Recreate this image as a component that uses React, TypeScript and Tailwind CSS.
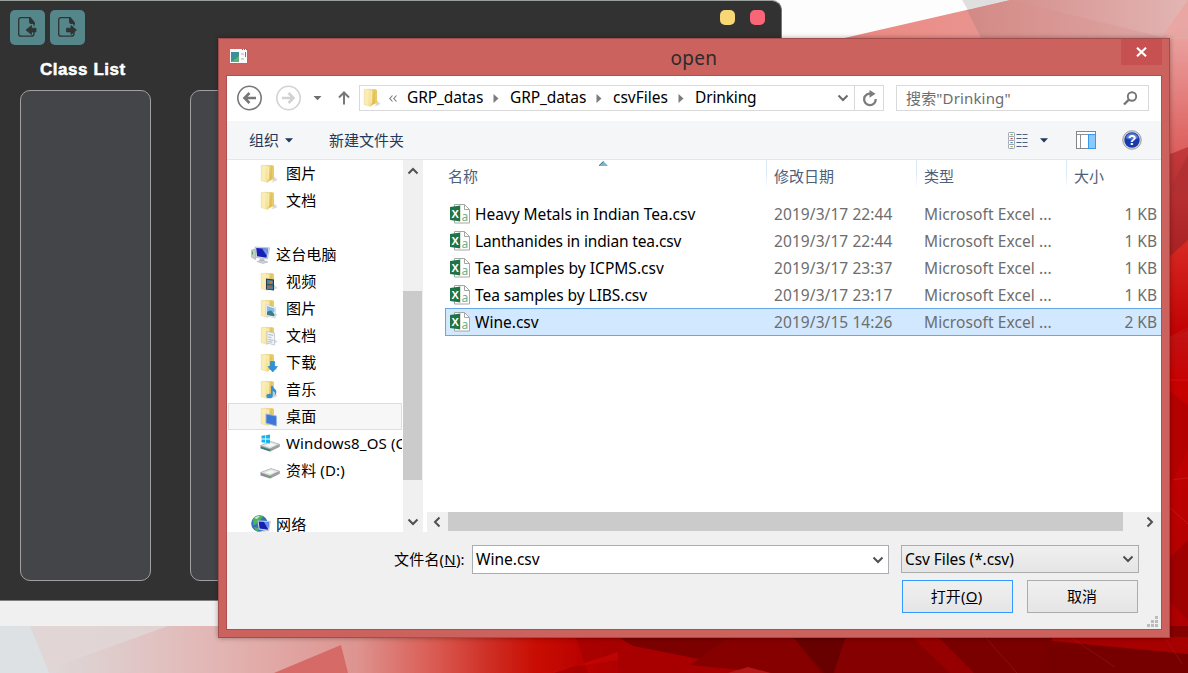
import React from "react";

const Wallpaper = () => (
  <svg className="absolute inset-0" width="1188" height="673" viewBox="0 0 1188 673">
    <defs>
      <linearGradient id="bottom" x1="0" x2="1188" y1="0" y2="0" gradientUnits="userSpaceOnUse">
        <stop offset="0" stopColor="#dde0e2" />
        <stop offset="0.08" stopColor="#dfcfcf" />
        <stop offset="0.19" stopColor="#e2b3b1" />
        <stop offset="0.3" stopColor="#de9490" />
        <stop offset="0.37" stopColor="#d9574e" />
        <stop offset="0.41" stopColor="#cf3026" />
        <stop offset="0.45" stopColor="#c90d03" />
        <stop offset="0.49" stopColor="#b90200" />
        <stop offset="0.55" stopColor="#a60000" />
        <stop offset="1" stopColor="#860000" />
      </linearGradient>
      <linearGradient id="right" x1="0" x2="0" y1="0" y2="1">
        <stop offset="0" stopColor="#eba5a3" />
        <stop offset="0.19" stopColor="#dc5e5c" />
        <stop offset="0.24" stopColor="#cc4a48" />
        <stop offset="0.4" stopColor="#bb2224" />
        <stop offset="0.55" stopColor="#c80000" />
        <stop offset="1" stopColor="#a90000" />
      </linearGradient>
      <linearGradient id="pink" x1="0" x2="1" y1="0" y2="0">
        <stop offset="0" stopColor="#ec8781" />
        <stop offset="1" stopColor="#e5a7a3" />
      </linearGradient>
      <linearGradient id="dusk" x1="0" x2="1" y1="0" y2="0">
        <stop offset="0" stopColor="#d38985" />
        <stop offset="1" stopColor="#e2b5b3" />
      </linearGradient>
      <linearGradient id="darkRed" x1="0" x2="0" y1="0" y2="1">
        <stop offset="0" stopColor="#c23a3c" />
        <stop offset="1" stopColor="#a92022" />
      </linearGradient>
      <linearGradient id="bright" x1="0" x2="0" y1="0" y2="1">
        <stop offset="0" stopColor="#d82a24" />
        <stop offset="1" stopColor="#bf0000" />
      </linearGradient>
    </defs>
    <rect width="1188" height="45" fill="#fdfdfd" />
    <rect x="1160" y="30" width="28" height="643" fill="url(#right)" />
    <polygon points="840,39 1010,0 1188,0 1188,39" fill="url(#pink)" />
    <polygon points="962,0 1010,0 968,10" fill="#e0dfdf" />
    <polygon points="967,10 1010,0 1188,0 1168,40 982,40" fill="url(#dusk)" />
    <polygon points="985,7 1010,0 1170,39 1008,39" fill="#d68f8b" opacity="0.3" />
    <polygon points="1188,0 1188,27 1160,40" fill="#eaa6a3" />
    <polygon points="1168,155 1188,147 1188,245 1168,258" fill="url(#darkRed)" />
    <polygon points="1168,193 1188,155 1188,193" fill="#b33032" />
    <polygon points="1168,258 1188,240 1188,330 1168,338" fill="url(#bright)" />
    <path d="M1168 338L1188 328M1168 380h20M1168 480l20-2M1168 506l20 18" stroke="#d0292a" strokeWidth="1" opacity="0.5" />
    <polygon points="1168,390 1188,405 1188,450 1168,490" fill="#b50000" />
    <polygon points="1168,560 1188,540 1188,620 1168,600" fill="#9f0000" />
    <rect y="626" width="1188" height="47" fill="url(#bottom)" />
    <polygon points="0,626 30,626 49,673 0,673" fill="#dde1e4" />
    <polygon points="30,626 168,626 49,669" fill="#e1d5d5" opacity="0.9" />
    <polygon points="274,673 341,645 348,673" fill="#d66a66" />
    <polygon points="576,637 640,637 618,652 554,673 588,673" fill="#a40000" opacity="0.7" />
    <polygon points="535,673 554,673 618,652 618,660" fill="#d00a06" opacity="0.4" />
    <polygon points="618,652 640,645 771,673 618,673" fill="#a80000" />
    <polygon points="618,637 800,637 835,673 771,673 633,646" fill="#7d0000" />
    <polygon points="690,665 730,637 793,637 820,673 771,673" fill="#860000" />
    <polygon points="793,637 846,637 834,673 824,673" fill="#680000" />
    <polygon points="846,637 912,637 970,673 834,673" fill="#850000" />
    <polygon points="912,637 938,637 974,673 950,673" fill="#970000" />
    <polygon points="938,637 1060,637 1040,673 974,673" fill="#7a0000" />
    <polygon points="1052,637 1188,637 1188,668 1052,641" fill="#a60000" />
    <polygon points="1052,641 1188,654 1188,673 1038,673" fill="#760000" />
    <polygon points="728,673 748,667 771,673" fill="#b51616" />
    <path d="M985 637l32 36M1070 637l45 30M1165 637l17 27" stroke="#a51c1c" opacity="0.45" fill="none" />
  </svg>
);

const ToolIcon = ({ out }: { out?: boolean }) => (
  <svg width="35" height="35" viewBox="0 0 35 35" fill="none">
    <path d="M24 22v1.500q0 2.700-2.500 2.700h-10.500q-2.300 0-2.300-2.300V10q0-2.300 2.300-2.300h9l4 5v3" stroke="#2f3434" strokeWidth="1.300" />
    <path d="M19 7.500h1.700l4.100 5v1.500h-3.800q-2 0-2-2z" fill="#2f3434" />
    <path
      d={out ? "M16.500 18.200h4.500v-2.700l5.500 4.500-5.500 4.500v-2.600h-4.500z" : "M26 18.200h-4.500v-2.700l-5.500 4.500 5.500 4.500v-2.600h4.500z"}
      fill="#2f3434"
      stroke="#2f3434"
      strokeWidth="0.800"
    />
  </svg>
);

type Badge = "none" | "video" | "picture" | "doc" | "down" | "music" | "desktop";

const Folder = ({ badge = "none" }: { badge?: Badge }) => (
  <svg width="18" height="20" viewBox="0 0 18 20" className="shrink-0">
    <defs>
      <linearGradient id="fold" x1="0" x2="1" y1="0" y2="0.3">
        <stop offset="0" stopColor="#fbf0b4" />
        <stop offset="0.55" stopColor="#f3de90" />
        <stop offset="1" stopColor="#dfb94c" />
      </linearGradient>
    </defs>
    <path d="M12 18.500l5.500-2.500-3.500-3.500z" fill="#c9c9c9" opacity="0.7" />
    <path d="M5 1.200h7.800l1.200 1v12.800l-7 3z" fill="#e8ca66" />
    <path d="M1.200 1.500l5.800-.3v17l-5.800-1.600z" fill="#f9edb4" stroke="#e6d28c" strokeWidth="0.500" />
    <path d="M5 4l3.200-2.500h3.300v13.500l-4 3.700-2.500-.9z" fill="url(#fold)" />
    <path d="M8.200 3v12" stroke="#fff8cf" strokeWidth="0.800" />
    {badge === "video" && (
      <g>
        <path d="M6 6.500l8 1v11l-8-1z" fill="#2d3a45" />
        <path d="M7 7.800l6 .6v4.200l-6-.4zM7 13l6 .5v4l-6-.6z" fill="#3e86a8" />
        <circle cx="10.800" cy="10.300" r="1.500" fill="#d4742e" />
        <circle cx="9.500" cy="15.200" r="1.400" fill="#b8622c" />
      </g>
    )}
    {badge === "picture" && (
      <g>
        <path d="M6 5.500l9.500 3v10.500l-9.500-2z" fill="#f4f8fb" stroke="#b9c3cc" strokeWidth="0.500" />
        <path d="M7 7l7.500 2.400v4l-7.500-1z" fill="#7dbbe8" />
        <path d="M7 12.400l4-1 3.500 3.600v2.500l-7.500-1.600z" fill="#3d7c8a" />
      </g>
    )}
    {badge === "doc" && (
      <g>
        <path d="M7 5.500l7.500 1.500v12l-7.500-2z" fill="#f3f5f8" stroke="#aab3bd" strokeWidth="0.600" />
        <path d="M8.300 8.500l5 .8M8.300 11l3 .5M8.300 13.500l5 .9M8.300 15.500l4 .8" stroke="#8fa4bd" strokeWidth="0.800" />
      </g>
    )}
    {badge === "down" && <path d="M10.500 8.500h4.200v5h2.800l-4.800 5.500-4.800-5.500h2.600z" fill="#2b93dc" stroke="#1b78bd" strokeWidth="0.500" />}
    {badge === "music" && (
      <g fill="#3590cf">
        <ellipse cx="9.500" cy="16" rx="3.200" ry="2.300" />
        <path d="M11 6h1.800c.3 2.500 4 3 3.500 6.500-.1 1.700-1 2.500-1.600 3 .8-2.800-.4-3.900-2-4.500v5.200h-1.700z" />
      </g>
    )}
    {badge === "desktop" && <path d="M6 7l10.500 2v10l-10.500-2.800z" fill="#3c78d8" stroke="#9cb5dd" strokeWidth="0.900" />}
  </svg>
);

const Computer = () => (
  <svg width="20" height="18" viewBox="0 0 20 18" className="shrink-0">
    <path d="M.5 4l4-1v10.500l-4-2.200z" fill="#c6cbd0" stroke="#979da3" strokeWidth="0.500" />
    <path d="M1.500 5.500v3" stroke="#52a850" />
    <path d="M4 1l14.500.8-2 11.200-11.500-1.600z" fill="#dfe3ea" stroke="#a3aab5" strokeWidth="0.600" />
    <path d="M5.200 2.100l11.900.7-1.600 8.900-9.400-1.400z" fill="#1620b4" />
    <path d="M11 2.400l6.100.4-1.300 7z" fill="#6d94ee" />
    <path d="M9 12.500l4 .6 1 2.700-6-.8z" fill="#bcc1c7" />
    <path d="M6 15.500l6-1 5 1.500-5 1.500z" fill="#d0d3d7" stroke="#a0a4a9" strokeWidth="0.500" />
  </svg>
);

const Drive = ({ os }: { os?: boolean }) => (
  <svg width="20" height="20" viewBox="0 0 20 20" className="shrink-0">
    <path d="M.5 11.500l10.500-4 8.500 2.700v2.500l-9.500 4.800-9.500-3z" fill="#8c9094" />
    <path d="M.5 11.500l10.500-4 8.500 2.700-9.500 4.500z" fill="#e1e3e4" stroke="#a5a8ab" strokeWidth="0.500" />
    <path d="M5 11.600l6-2.300 4.500 1.400-5.500 2.400z" fill="#f8f8f8" />
    <path d="M10 14.700l9.500-4.500v2.500l-9.500 4.800z" fill="#9da1a4" />
    <circle cx="10.500" cy="15.800" r="0.900" fill="#55b855" />
    {os && <path d="M1.500 1.800l3.500-.5v3.300h-3.500zM5.700 1.200l4.300-.6v4h-4.300zM1.500 5.400h3.500v3.300l-3.500-.5zM5.700 5.400h4.300v4l-4.300-.6z" fill="#13b4ea" />}
    {os && <path d="M.8 12.800l9.200 3v1.400l-9.200-3z" fill="#2c7c86" />}
  </svg>
);

const Network = () => (
  <svg width="20" height="19" viewBox="0 0 20 19" className="shrink-0">
    <circle cx="8.500" cy="8.500" r="8.300" fill="#2f72b8" />
    <path d="M2 4q5-5 10-2.500l-2 3-3.500 1-1 3.500-3 1.500zM3 12l4 1v4q-3-1.500-4-5z" fill="#4cb45a" />
    <path d="M3 3q3-2.500 6-2l-3 3z" fill="#c8eec8" />
    <path d="M6.500 5.500l12.800.8-1.500 9.700-10.200-1.500z" fill="#d9dee6" stroke="#9ca5b1" strokeWidth="0.500" />
    <path d="M7.700 6.600l10.400.7-1.200 7.500-8.400-1.300z" fill="#1420b0" />
    <path d="M13 7l5.100.3-1.200 6.700z" fill="#6c93ea" />
    <path d="M8 17.500l5-1.500 5 1.500-4 1.500z" fill="#ccd0d4" />
  </svg>
);

const ExcelFile = () => (
  <svg width="20" height="21" viewBox="0 0 20 21" className="relative -top-px shrink-0">
    <path d="M4.500 1.500h10l5 5v13.500h-15z" fill="#fff" stroke="#a6a6a6" />
    <path d="M14.500 1.500v5h5" fill="none" stroke="#a6a6a6" />
    <path d="M0 4l10.500-1.500v16l-10.500-1.500z" fill="#1f7346" />
    <path d="M10.500 3v16" stroke="#fff" strokeWidth="0.600" />
    <text x="1.400" y="14.700" fontSize="11" fontWeight="700" fill="#fff" className="font-['Liberation_Sans',sans-serif]">X</text>
    <text x="11.600" y="17.800" fontSize="12" fill="#6bb08a" className="font-['Noto_Sans',sans-serif]">a</text>
  </svg>
);

const Chevron = ({ dir, color = "#505050" }: { dir: "up" | "down" | "left" | "right"; color?: string }) => {
  const d = {
    up: "M1.500 8.500L6 4l4.500 4.500",
    down: "M1.500 3.500L6 8l4.500-4.500",
    left: "M8.500 1.500L4 6l4.500 4.500",
    right: "M3.500 1.500L8 6l-4.500 4.500",
  }[dir];
  return (
    <svg width="12" height="12" viewBox="0 0 12 12" className="shrink-0">
      <path d={d} fill="none" stroke={color} strokeWidth="2" />
    </svg>
  );
};

const Caret = () => (
  <svg width="8" height="5" viewBox="0 0 8 5">
    <path d="M0 .3h8L4 4.600z" fill="#1e395b" />
  </svg>
);

const Crumb = ({ text, className }: { text: string; className: string }) => (
  <>
    <span className={"whitespace-nowrap " + className}>{text}</span>
    <svg width="6" height="9" viewBox="0 0 6 9" className="ml-[10px] mr-[11px] shrink-0">
      <path d="M.5 0L5.500 4.500.5 9z" fill="#7c7c7c" />
    </svg>
  </>
);

const tree: { label: string; icon: React.ReactNode; root?: boolean; selected?: boolean }[] = [
  { label: "图片", icon: <Folder /> },
  { label: "文档", icon: <Folder /> },
  { label: "", icon: null },
  { label: "这台电脑", icon: <Computer />, root: true },
  { label: "视频", icon: <Folder badge="video" /> },
  { label: "图片", icon: <Folder badge="picture" /> },
  { label: "文档", icon: <Folder badge="doc" /> },
  { label: "下载", icon: <Folder badge="down" /> },
  { label: "音乐", icon: <Folder badge="music" /> },
  { label: "桌面", icon: <Folder badge="desktop" />, selected: true },
  { label: "Windows8_OS (C:)", icon: <Drive os /> },
  { label: "资料 (D:)", icon: <Drive /> },
  { label: "", icon: null },
  { label: "网络", icon: <Network />, root: true },
];

const files = [
  { name: "Heavy Metals in Indian Tea.csv", date: "2019/3/17 22:44", size: "1 KB", track: "tracking-[-0.04px]" },
  { name: "Lanthanides in indian tea.csv", date: "2019/3/17 22:44", size: "1 KB", track: "tracking-[-0.15px]" },
  { name: "Tea samples by ICPMS.csv", date: "2019/3/17 23:37", size: "1 KB", track: "tracking-[0.02px]" },
  { name: "Tea samples by LIBS.csv", date: "2019/3/17 23:17", size: "1 KB", track: "tracking-[-0.06px]" },
  { name: "Wine.csv", date: "2019/3/15 14:26", size: "2 KB", selected: true, track: "tracking-[0px]" },
];

const AppWindow = () => (
  <div className="absolute left-0 top-0 h-[626px] w-[782px] rounded-tr-[10px] bg-[#f0f0f0]">
    <div className="h-[601px] overflow-hidden rounded-tr-[10px] border-y border-r border-t-[#9aa09c] border-r-[#777] border-b-[#7f7f7f] bg-[#323232]">
      <div className="flex justify-between">
        <div className="flex gap-[5px] pl-[10px] pt-[9px]">
          <div className="size-[35px] rounded-[5px] bg-[#54868a]"><ToolIcon /></div>
          <div className="size-[35px] rounded-[5px] bg-[#54868a]"><ToolIcon out /></div>
        </div>
        <div className="flex gap-[15px] pr-4 pt-[9px]">
          <div className="size-[15px] rounded-[5px] bg-[#f8d673]" />
          <div className="size-[15px] rounded-[5px] bg-[#fa6678]" />
        </div>
      </div>
      <div className="pl-[40px] pt-[13px] font-['Liberation_Sans',sans-serif] text-[17px] font-bold leading-[24px] tracking-[0.55px] text-white [-webkit-text-stroke:0.5px_white]">
        Class List
      </div>
      <div className="flex gap-[39px] pl-[20px] pt-[8px]">
        <div className="h-[491px] w-[131px] rounded-[10px] border border-[#a0a0a2] bg-[#444549]" />
        <div className="h-[491px] w-[560px] rounded-[10px] border border-[#a0a0a2] bg-[#444549]" />
      </div>
    </div>
  </div>
);

const AddressRow = () => (
  <div className="flex h-[45px] items-start bg-white pl-[10px] pt-[9px]">
    <svg width="122" height="26" viewBox="0 0 122 26" fill="none" className="shrink-0">
      <circle cx="12.500" cy="13" r="11.700" stroke="#777" strokeWidth="1.600" />
      <path d="M19 13H8M12.500 8L7.500 13l5 5" stroke="#777" strokeWidth="2.600" />
      <circle cx="51.500" cy="13" r="11.700" stroke="#d2d2d2" strokeWidth="1.600" />
      <path d="M45 13h11M51.500 8L56.500 13l-5 5" stroke="#d2d2d2" strokeWidth="2.600" />
      <path d="M76.500 11h8l-4 4.300z" fill="#6e6e6e" />
      <path d="M107 19.500V8M102 12.500L107 7.500l5 5" stroke="#777" strokeWidth="2" />
    </svg>
    <div className="flex h-[26px] w-[525px] items-center border border-[#d9d9d9] text-[15.5px] text-black">
      <div className="ml-[3px] flex w-[18px] pb-px"><Folder /></div>
      <svg width="8" height="7" viewBox="0 0 8 7" className="ml-[8px] mr-[9px] shrink-0" fill="none">
        <path d="M3.500.5L.8 3.500l2.700 3M7.500.5L4.800 3.500l2.700 3" stroke="#777" strokeWidth="1.100" />
      </svg>
      <Crumb text="GRP_datas" className="ml-px w-[76px] tracking-[-0.1px]" />
      <Crumb text="GRP_datas" className="w-[76px] tracking-[-0.1px]" />
      <Crumb text="csvFiles" className="w-[55px]" />
      <span className="tracking-[-0.15px]">Drinking</span>
      <div className="ml-auto flex h-full items-center">
        <div className="mr-[5px]"><Chevron dir="down" color="#6b6b6b" /></div>
        <div className="flex h-full w-[29px] items-center justify-center border-l border-[#d9d9d9] pl-px">
          <svg width="16" height="17" viewBox="0 0 16 17" fill="none">
            <path d="M9.500 3.800A5.800 5.800 0 1 0 13.700 9" stroke="#7c7c7c" strokeWidth="2.300" />
            <path d="M7.500 0l6 3.700-6 4z" fill="#7c7c7c" />
          </svg>
        </div>
      </div>
    </div>
    <div className="ml-[12px] flex h-[26px] w-[253px] items-center justify-between border border-[#d9d9d9] pl-[9px] pr-[10px] text-[15px] text-[#6d6d6d]">
      <span className="tracking-[0.15px]">搜索"Drinking"</span>
      <svg width="15" height="15" viewBox="0 0 15 15" fill="none">
        <circle cx="9" cy="5.500" r="4.200" stroke="#757575" strokeWidth="1.900" />
        <path d="M6 8.500l-5 5" stroke="#757575" strokeWidth="2.400" />
      </svg>
    </div>
  </div>
);

const CommandBar = () => (
  <div className="flex h-[39px] items-center border-b border-[#e4e6e9] bg-[#f5f6f7] pl-[22px] text-[15px] text-[#1e395b]">
    <span>组织</span>
    <div className="ml-[6px]"><Caret /></div>
    <span className="ml-[36px]">新建文件夹</span>
    <div className="ml-auto flex items-center pr-[19px]">
      <svg width="20" height="17" viewBox="0 0 20 17" fill="none">
        {["#8b9e55", "#c8443c", "#4f86c8", "#b0a23c"].map((c, i) => (
          <g key={c} transform={`translate(0 ${i * 4})`}>
            <rect x="0.500" y="0.500" width="6" height="4" rx="0.800" fill="#fff" stroke="#98a3b2" />
            <rect x="2.500" y="2" width="2.200" height="1.200" fill={c} />
            <path d="M8.500 2.500h5M14.500 2.500h5" stroke="#50607a" strokeWidth="1.100" />
          </g>
        ))}
      </svg>
      <div className="ml-[12px]"><Caret /></div>
      <svg width="20" height="18" viewBox="0 0 20 18" className="ml-[28px]">
        <rect x="0.500" y="0.500" width="19" height="17" fill="#fff" stroke="#858585" />
        <path d="M1 3.500h18M4.500 4v13" stroke="#909090" />
        <rect x="12.500" y="3.500" width="7" height="14" fill="#8dc8fa" stroke="#3697ef" />
      </svg>
      <svg width="20" height="20" viewBox="0 0 20 20" className="ml-[26px]">
        <circle cx="10" cy="10" r="9.300" fill="#d6d6dc" stroke="#8c8c92" strokeWidth="0.800" />
        <circle cx="10" cy="10" r="7.700" fill="#173aa9" />
        <path d="M3.500 8a6.800 6.800 0 0 1 13 0q-6.500 3-13 0z" fill="#587bd2" />
        <text x="10" y="15" textAnchor="middle" fontSize="14" fontWeight="700" fill="#fff" className="font-['Liberation_Sans',sans-serif]">?</text>
      </svg>
    </div>
  </div>
);

const Sidebar = () => (
  <div className="flex h-full w-[200px] shrink-0">
    <div className="w-[176px] overflow-hidden bg-white pl-px text-[15px] text-black">
      {tree.map((item, i) => (
        <div
          key={i}
          className={
            "flex h-[27px] w-[174px] items-center overflow-hidden whitespace-nowrap border border-r-0 " +
            (item.selected ? "border-[#dedede] bg-[#f7f7f7] shadow-[inset_-1px_0_0_#dedede] " : "border-transparent ") +
            (item.root ? "pl-[22px]" : "pl-[31px]")
          }
        >
          <div className={item.root ? "flex w-[25px] shrink-0" : "flex w-[26px] shrink-0"}>{item.icon}</div>
          <span className="pb-px tracking-[0.15px]">{item.label}</span>
        </div>
      ))}
    </div>
    <div className="flex w-[19px] flex-col items-center bg-[#f0f0f0]">
      <div className="flex h-[21px] items-center"><Chevron dir="up" /></div>
      <div className="mt-[110px] h-[189px] w-full bg-[#cbcbcb]" />
      <div className="mt-auto flex h-[21px] items-center"><Chevron dir="down" /></div>
    </div>
    <div className="w-[5px] border-l border-[#f0f0f0] bg-white" />
  </div>
);

const headers = [
  { label: "名称", width: "w-[320px] pl-[1px]" },
  { label: "修改日期", width: "w-[150px] pl-[7px]" },
  { label: "类型", width: "w-[150px] pl-[7px]" },
  { label: "大小", width: "w-[94px] pl-[7px]" },
];

const FileList = () => (
  <div className="flex min-w-0 flex-1 flex-col">
    <div className="relative flex h-[41px] pl-[20px] text-[15px] text-[#4c607a]">
      {headers.map((h, i) => (
        <div key={h.label} className={"flex shrink-0 " + h.width}>
          <span className="h-[32px] leading-[32px]">{h.label}</span>
          {i < 3 && <div className="ml-auto h-[28px] w-px bg-linear-to-b from-[#dceaf7] via-[#dceaf7] to-white" />}
        </div>
      ))}
      <svg width="9" height="5" viewBox="0 0 9 5" className="absolute left-[172px] top-[1px]">
        <path d="M0 5L4.500 .3 9 5z" fill="#7eb3cf" />
        <path d="M0 4.700L4.500 .3" stroke="#2e5f7c" />
      </svg>
    </div>
    {files.map((f) => (
      <div
        key={f.name}
        className={
          "ml-[18px] flex items-center whitespace-nowrap border text-[15.5px] text-[#6d6d6d] " +
          (f.selected ? "-mt-px h-[28px] border-r-0 border-[#66a7e8] bg-[#d1e8ff] pt-px" : "h-[27px] border-transparent border-r-0")
        }
      >
        <div className="flex w-[324px] items-center pl-[4px]">
          <ExcelFile />
          <span className={"ml-[5px] text-black " + f.track}>{f.name}</span>
        </div>
        <span className="ml-[4px] w-[150px] tracking-[0.08px]">{f.date}</span>
        <span className="w-[140px] tracking-[0.1px]">Microsoft Excel ...</span>
        <span className="ml-auto pr-[4px]">{f.size}</span>
      </div>
    ))}
    <div className="mt-auto flex h-[20px] items-center bg-[#f0f0f0] pl-[4px] pr-[5px]">
      <Chevron dir="left" />
      <div className="ml-[5px] h-[19px] w-[675px] self-start bg-[#cbcbcb]" />
      <div className="ml-auto flex"><Chevron dir="right" /></div>
    </div>
  </div>
);

const Footer = () => (
  <div className="relative h-[97px] bg-[#f0f0f0] pt-[13px] text-[15px] text-black">
    <div className="flex pl-[167px]">
      <span className="w-[78px] whitespace-nowrap leading-[29px] tracking-[0.2px]">文件名(<u>N</u>):</span>
      <div className="flex h-[29px] w-[417px] items-center justify-between border border-[#abadb3] bg-white pl-[3px] pr-[4px]">
        <span className="text-[15.5px]">Wine.csv</span>
        <Chevron dir="down" />
      </div>
      <div className="ml-[12px] flex h-[28px] w-[238px] items-center justify-between border border-[#acacac] bg-linear-to-b from-[#f0f0f0] to-[#e5e5e5] pl-[3px] pr-[4px]">
        <span className="pt-px text-[15.5px] tracking-[-0.08px]">Csv Files (*.csv)</span>
        <Chevron dir="down" />
      </div>
    </div>
    <div className="mt-[6px] flex justify-end gap-[14px] pr-[23px]">
      <button className="h-[33px] w-[111px] border border-[#3399ff] bg-linear-to-b from-[#f0f0f0] to-[#e5e5e5] pr-[2px] tracking-[0.2px]">打开(<u>O</u>)</button>
      <button className="h-[33px] w-[111px] border border-[#acacac] bg-linear-to-b from-[#f0f0f0] to-[#e5e5e5] pr-px">取消</button>
    </div>
    <svg width="11" height="11" viewBox="0 0 11 11" className="absolute bottom-[2px] right-[3px]">
      <path d="M8 0h3v3H8zM4 4h3v3H4zM8 4h3v3H8zM0 8h3v3H0zM4 8h3v3H4zM8 8h3v3H8z" fill="#bcbcbc" />
    </svg>
  </div>
);

const OpenDialog = () => (
  <div className="absolute left-[218px] top-[38px] h-[600px] w-[952px] border border-[#a04d4b] bg-[#cc625e] px-[7px] shadow-[0_0_5px_rgba(0,0,0,0.35)]">
    <div className="relative flex h-[36px] items-start">
      <svg width="18" height="15" viewBox="0 0 18 15" className="ml-[4px] mt-[10px]">
        <rect width="18" height="15" fill="#9a6b6b" opacity="0.4" />
        <rect width="17" height="14" fill="#fafafa" />
        <rect x="1" y="3" width="8" height="10" fill="#3f8f96" />
        <path d="M1 13l8-6v6z" fill="#5fb275" />
        <path d="M11 5h3M11 10h3" stroke="#d5d5d5" strokeWidth="2" />
        <path d="M15.500 3v5" stroke="#51906f" />
        <path d="M12 .5h1M14 .5h1M16 .5h1" stroke="#666" />
      </svg>
      <span className="absolute inset-x-0 top-[5px] text-center text-[19px] leading-[28px] tracking-[0.3px] text-[#2b2b2b]">open</span>
      <div className="ml-auto flex h-[26px] w-[41px] items-center justify-center bg-[#c75050]">
        <svg width="11" height="10" viewBox="0 0 11 10"><path d="M1 .7l9 8.600M10 .7L1 9.300" stroke="#fff" strokeWidth="2.100" /></svg>
      </div>
    </div>
    <div className="h-[555px] border border-[#b0504e]">
      <AddressRow />
      <CommandBar />
      <div className="flex h-[372px] bg-white">
        <Sidebar />
        <FileList />
      </div>
      <Footer />
    </div>
  </div>
);

export default function App() {
  return (
    <div className="relative h-[673px] w-[1188px] overflow-hidden font-['Noto_Sans','Noto_Sans_CJK_SC',sans-serif]">
      <Wallpaper />
      <AppWindow />
      <OpenDialog />
    </div>
  );
}
